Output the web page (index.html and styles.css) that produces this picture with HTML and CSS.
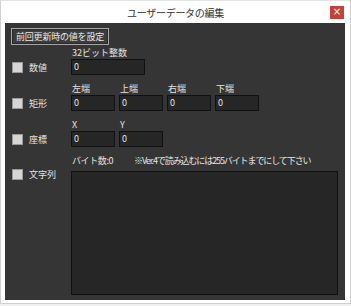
FILE: index.html
```html
<!DOCTYPE html>
<html lang="ja">
<head>
    <meta charset="UTF-8">
    <title>ユーザーデータの編集</title>
    <link rel="stylesheet" href="styles.css">
</head>
<body>
    <div class="window">
        <div class="titlebar">
            <span class="title">ユーザーデータの編集</span>
            <span class="close">×</span>
        </div>
        <div class="panel">
            <button class="btn">前回更新時の値を設定</button>

            <div class="row">
                <label class="opt"><span class="check"></span>数値</label>
                <div class="fields">
                    <div class="field">
                        <span class="cap">32ビット整数</span>
                        <div class="input wide">0</div>
                    </div>
                </div>
            </div>

            <div class="row">
                <label class="opt"><span class="check"></span>矩形</label>
                <div class="fields">
                    <div class="field"><span class="cap">左端</span><div class="input">0</div></div>
                    <div class="field"><span class="cap">上端</span><div class="input">0</div></div>
                    <div class="field"><span class="cap">右端</span><div class="input">0</div></div>
                    <div class="field"><span class="cap">下端</span><div class="input">0</div></div>
                </div>
            </div>

            <div class="row">
                <label class="opt"><span class="check"></span>座標</label>
                <div class="fields">
                    <div class="field"><span class="cap">X</span><div class="input">0</div></div>
                    <div class="field"><span class="cap">Y</span><div class="input">0</div></div>
                </div>
            </div>

            <div class="row text-row">
                <label class="opt"><span class="check"></span>文字列</label>
                <div class="field grow">
                    <div class="caps">
                        <span class="cap count">バイト数:0</span>
                        <span class="cap note">※Ver.4で読み込むには255バイトまでにして下さい</span>
                    </div>
                    <div class="textbox"></div>
                </div>
            </div>
        </div>
    </div>
</body>
</html>
```

FILE: styles.css
```css
body {
    margin: 0;
    background-color: #f0f0f0;
    font-family: "Noto Sans CJK JP", "Liberation Sans", sans-serif;
}
.window {
    width: 351px;
    height: 304px;
    box-sizing: border-box;
    background-color: #ffffff;
    border: 1px solid #d0d0d0;
    border-top-color: #e4e4e4;
}
.titlebar {
    height: 22px;
    display: flex;
    align-items: center;
    justify-content: center;
    position: relative;
}
.title {
    font-size: 10px;
    color: #333333;
    letter-spacing: -0.3px;
}
.close {
    position: absolute;
    right: 6px;
    top: 5px;
    width: 14px;
    height: 13px;
    background-color: #c7413c;
    color: #ffffff;
    font-size: 10px;
    line-height: 12px;
    text-align: center;
    font-family: "DejaVu Sans", sans-serif;
}
.panel {
    margin: 0 5px 0 4px;
    height: 277px;
    box-sizing: border-box;
    padding: 5px 7px 0 6px;
    background-color: #353535;
    color: #e4e4e4;
    font-size: 9px;
}
.btn {
    display: block;
    height: 17px;
    width: 98px;
    padding: 0;
    margin: 0 0 2px 0;
    background-color: #3c3c3c;
    border: 1px solid #a6a6a6;
    box-shadow: inset 0 0 0 1px #2a2a2a;
    color: #e8e8e8;
    font-family: inherit;
    font-size: 9px;
    letter-spacing: -0.2px;
}
.row {
    display: flex;
    margin-bottom: 8px;
}
.opt {
    width: 60px;
    flex: none;
    display: flex;
    align-items: center;
    height: 16px;
    margin-top: 12px;
}
.check {
    width: 9px;
    height: 9px;
    margin: 0 6px 0 1px;
    background-color: #d6d6d6;
    border: 1px solid #9a9a9a;
}
.fields {
    display: flex;
    gap: 4px;
}
.field {
    display: flex;
    flex-direction: column;
}
.cap {
    height: 12px;
    line-height: 12px;
    padding-left: 1px;
    white-space: nowrap;
}
.input {
    width: 44px;
    height: 16px;
    box-sizing: border-box;
    border: 1px solid #111111;
    background-color: #262626;
    padding-left: 2px;
    line-height: 14px;
    font-size: 9px;
}
.input.wide {
    width: 74px;
}
.text-row .opt {
    margin-top: 11px;
}
.grow {
    flex: 1;
}
.caps {
    display: flex;
    margin-bottom: 4px;
}
.count {
    width: 61px;
    flex: none;
    letter-spacing: -0.4px;
}
.note {
    letter-spacing: -1.1px;
}
.textbox {
    height: 124px;
    box-sizing: border-box;
    border: 1px solid #111111;
    background-color: #262626;
}
```
